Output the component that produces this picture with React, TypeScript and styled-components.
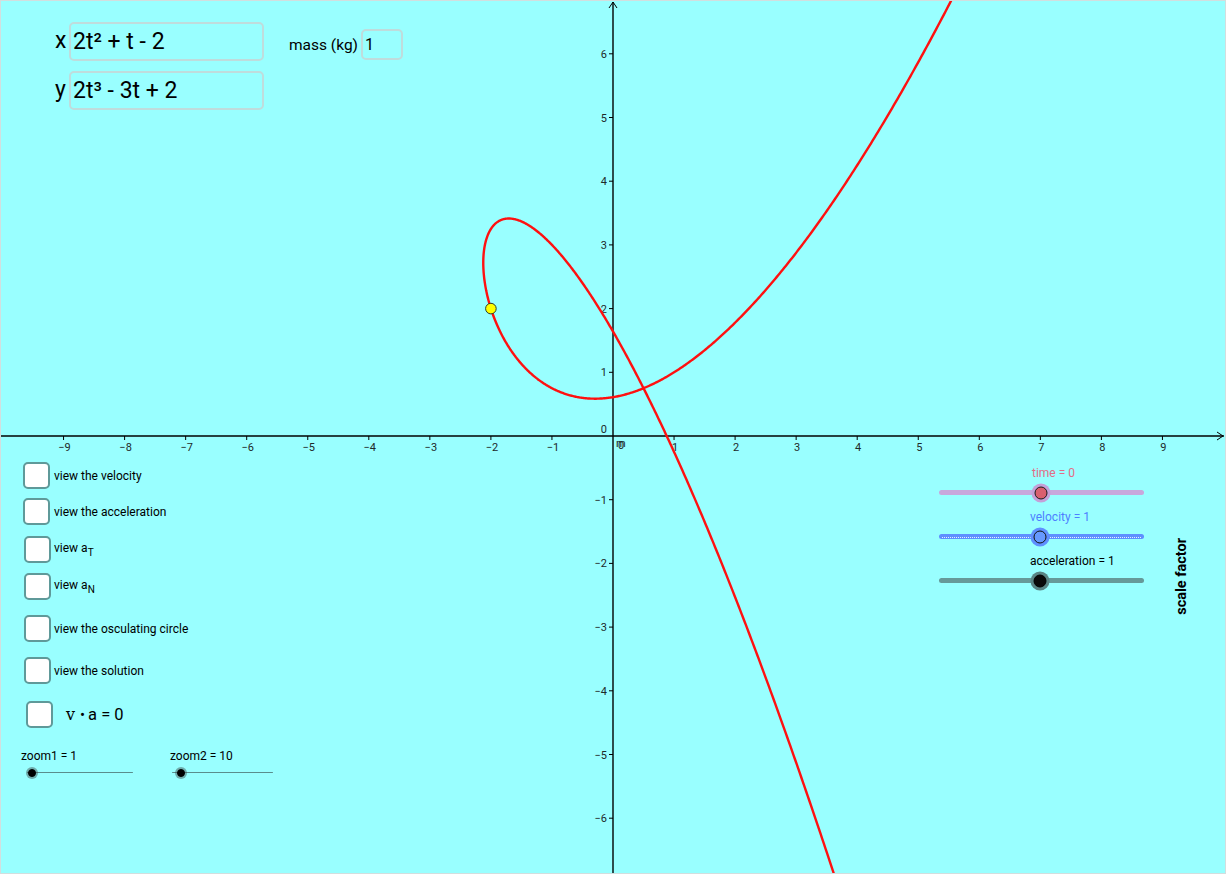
import React from "react";
import styled, { createGlobalStyle } from "styled-components";

const GlobalStyle = createGlobalStyle`
  html, body { margin: 0; padding: 0; background: #ffffff; }
  body { font-family: Roboto, "Noto Sans", sans-serif; }
`;

const OX = 612;
const OY = 435;
const SX = 61.05;
const SY = 63.7;
const W = 1224;
const H = 872;

const Stage = styled.div`
  position: relative;
  width: ${W}px;
  height: ${H}px;
  border: 1px solid #d2dede;
  background: #99ffff;
  overflow: hidden;
  font-family: Roboto, "Noto Sans", sans-serif;
  color: #000;
`;

const Graph = styled.svg`
  position: absolute;
  left: 0;
  top: 0;
  width: ${W}px;
  height: ${H}px;
`;

/* ---------- formula inputs ---------- */
const FormulaPanel = styled.div`
  position: absolute;
  left: 54px;
  top: 21px;
  display: flex;
  flex-direction: column;
  gap: 11px;
`;

const FormulaRow = styled.div`
  display: flex;
  align-items: center;
  height: 38px;
`;

const VarLabel = styled.span`
  width: 14px;
  font-size: 23px;
  line-height: 38px;
`;

const ExprBox = styled.div<{ $w: number; $h: number; $size: number }>`
  box-sizing: border-box;
  width: ${(p) => p.$w}px;
  height: ${(p) => p.$h}px;
  border: 2px solid #bfdcdc;
  border-radius: 5px;
  display: flex;
  align-items: center;
  padding-left: 2px;
  font-size: ${(p) => p.$size}px;
  white-space: nowrap;
`;

const MassGroup = styled.div`
  align-self: flex-end;
  display: flex;
  align-items: center;
  gap: 3px;
  margin-left: 25px;
`;

const MassLabel = styled.span`
  font-size: 15.5px;
`;

/* ---------- check boxes ---------- */
const CheckList = styled.div`
  position: absolute;
  left: 22px;
  top: 461px;
  display: flex;
  flex-direction: column;
`;

const CheckRow = styled.label<{ $mt: number; $indent: number; $gap: number }>`
  display: flex;
  align-items: center;
  gap: ${(p) => p.$gap}px;
  margin-top: ${(p) => p.$mt}px;
  margin-left: ${(p) => p.$indent}px;
  height: 27px;
`;

const Box = styled.span`
  box-sizing: border-box;
  width: 27px;
  height: 27px;
  border: 2px solid #5f9999;
  border-radius: 5px;
  background: #ffffff;
  flex: none;
`;

const CheckText = styled.span`
  font-size: 12px;
  white-space: nowrap;
`;

const Sub = styled.sub`
  font-size: 10px;
  vertical-align: -4px;
`;

const DotFormula = styled.span`
  font-size: 16.5px;
  white-space: nowrap;
`;

const Bullet = styled.span`
  font-size: 15px;
  margin: 0 3px 0 5px;
`;

const SerifV = styled.span`
  font-family: "DejaVu Serif", "Liberation Serif", serif;
  font-size: 16px;
`;

/* ---------- sliders ---------- */
const ZoomRow = styled.div`
  position: absolute;
  left: 20px;
  top: 748px;
  display: flex;
  gap: 0;
`;

const RightSliders = styled.div`
  position: absolute;
  left: 938px;
  top: 465px;
  display: flex;
  flex-direction: column;
  gap: 15px;
`;

const SliderBlock = styled.div<{ $w: number }>`
  width: ${(p) => p.$w}px;
  display: flex;
  flex-direction: column;
`;

const Caption = styled.span<{ $color: string; $indent: number }>`
  margin-left: ${(p) => p.$indent}px;
  color: ${(p) => p.$color};
  font-size: 12px;
  line-height: 14px;
  white-space: nowrap;
`;

const Track = styled.div<{
  $color: string;
  $thick: number;
  $w: number;
  $indent: number;
  $mt: number;
  $dotted?: boolean;
}>`
  position: relative;
  margin-left: ${(p) => p.$indent}px;
  margin-top: ${(p) => p.$mt}px;
  width: ${(p) => p.$w}px;
  height: ${(p) => p.$thick}px;
  background: ${(p) => p.$color};
  border-radius: ${(p) => p.$thick / 2}px;
  &::after {
    content: "";
    display: ${(p) => (p.$dotted ? "block" : "none")};
    position: absolute;
    left: 3px;
    right: 3px;
    top: 50%;
    border-top: 1px dotted rgba(255, 255, 255, 0.85);
  }
`;

const Knob = styled.span<{
  $fill: string;
  $halo: string;
  $r: number;
  $ring: string;
  $haloW: number;
}>`
  position: absolute;
  top: 50%;
  box-sizing: border-box;
  width: ${(p) => p.$r * 2}px;
  height: ${(p) => p.$r * 2}px;
  transform: translate(-50%, -50%);
  border-radius: 50%;
  background: ${(p) => p.$fill};
  border: 1px solid ${(p) => p.$ring};
  box-shadow: 0 0 0 ${(p) => p.$haloW}px ${(p) => p.$halo};
  z-index: 1;
`;

const ScaleFactor = styled.span`
  position: absolute;
  left: 1172px;
  top: 537px;
  writing-mode: vertical-rl;
  transform: rotate(180deg);
  font-size: 14.5px;
  font-weight: 700;
  white-space: nowrap;
`;

/* ---------- graph drawing ---------- */
const AxisText = styled.text`
  font-family: Roboto, "DejaVu Sans", sans-serif;
  font-size: 11px;
  fill: #1e2a2a;
`;

function buildCurve(): string {
  const pts: string[] = [];
  for (let t = -2.06; t <= 1.78; t += 0.004) {
    const x = 2 * t * t + t - 2;
    const y = 2 * t * t * t - 3 * t + 2;
    pts.push(`${(OX + x * SX).toFixed(2)},${(OY - y * SY).toFixed(2)}`);
  }
  return "M" + pts.join("L");
}

const minus = (k: number) => (k < 0 ? "\u2212" + Math.abs(k) : String(k));

function GraphView() {
  const xs: number[] = [];
  for (let k = -9; k <= 9; k++) if (k !== 0) xs.push(k);
  const ys: number[] = [];
  for (let k = -6; k <= 6; k++) if (k !== 0) ys.push(k);
  return (
    <Graph viewBox={`0 0 ${W} ${H}`}>
      <g stroke="#000" strokeWidth={1.4} fill="none">
        <line x1={0} y1={OY} x2={W - 1} y2={OY} />
        <line x1={OX} y1={H} x2={OX} y2={1} />
        <polyline points={`${W - 8},${OY - 4} ${W - 2},${OY} ${W - 8},${OY + 4}`} strokeWidth={1} />
        <polyline points={`${OX - 4},${7} ${OX},${1} ${OX + 4},${7}`} strokeWidth={1} />
        {xs.map((k) => (
          <line key={`xt${k}`} x1={OX + k * SX} y1={OY} x2={OX + k * SX} y2={OY + 4} strokeWidth={1} />
        ))}
        {ys.map((k) => (
          <line key={`yt${k}`} x1={OX - 4} y1={OY - k * SY} x2={OX} y2={OY - k * SY} strokeWidth={1} />
        ))}
      </g>
      {xs.map((k) => (
        <AxisText key={`xl${k}`} x={OX + k * SX + (k < 0 ? 1 : 1)} y={OY + 15} textAnchor="middle">
          {minus(k)}
        </AxisText>
      ))}
      {ys.map((k) => (
        <AxisText key={`yl${k}`} x={OX - 6} y={OY - k * SY + 4} textAnchor="end">
          {minus(k)}
        </AxisText>
      ))}
      <AxisText x={OX - 6} y={OY - 3} textAnchor="end">
        0
      </AxisText>
      <AxisText x={OX + 5} y={OY + 13} fill="#3c5a5a">
        0
      </AxisText>
      <AxisText x={OX + 3} y={OY + 11} fontSize={10}>
        m
      </AxisText>
      <path d={buildCurve()} stroke="#ff1010" strokeWidth={2.4} fill="none" strokeLinejoin="round" />
      <circle cx={OX - 2 * SX} cy={OY - 2 * SY} r={5.3} fill="#ffff00" stroke="#2a3a2a" strokeWidth={1} />
    </Graph>
  );
}

type SliderProps = {
  caption: string;
  captionColor: string;
  captionIndent: number;
  width: number;
  trackIndent: number;
  trackWidth: number;
  trackColor: string;
  thick: number;
  gap: number;
  knobAt: number;
  knobFill: string;
  knobRing: string;
  knobHalo: string;
  knobR: number;
  haloW: number;
  dotted?: boolean;
};

function Slider(p: SliderProps) {
  return (
    <SliderBlock $w={p.width}>
      <Caption $color={p.captionColor} $indent={p.captionIndent}>
        {p.caption}
      </Caption>
      <Track
        $color={p.trackColor}
        $thick={p.thick}
        $w={p.trackWidth}
        $indent={p.trackIndent}
        $mt={p.gap}
        $dotted={p.dotted}
      >
        <Knob
          style={{ left: p.knobAt }}
          $fill={p.knobFill}
          $ring={p.knobRing}
          $halo={p.knobHalo}
          $r={p.knobR}
          $haloW={p.haloW}
        />
      </Track>
    </SliderBlock>
  );
}

export default function App() {
  return (
    <>
      <GlobalStyle />
      <Stage>
        <GraphView />

        <FormulaPanel>
          <FormulaRow>
            <VarLabel>x</VarLabel>
            <ExprBox $w={195} $h={39} $size={23}>
              2t² + t - 2
            </ExprBox>
            <MassGroup>
              <MassLabel>mass (kg)</MassLabel>
              <ExprBox $w={42} $h={31} $size={16}>
                1
              </ExprBox>
            </MassGroup>
          </FormulaRow>
          <FormulaRow>
            <VarLabel>y</VarLabel>
            <ExprBox $w={195} $h={39} $size={23}>
              2t³ - 3t + 2
            </ExprBox>
          </FormulaRow>
        </FormulaPanel>

        <CheckList>
          <CheckRow $mt={0} $indent={0} $gap={4}>
            <Box />
            <CheckText>view the velocity</CheckText>
          </CheckRow>
          <CheckRow $mt={9} $indent={0} $gap={4}>
            <Box />
            <CheckText>view the acceleration</CheckText>
          </CheckRow>
          <CheckRow $mt={11} $indent={1} $gap={3}>
            <Box />
            <CheckText>
              view a<Sub>T</Sub>
            </CheckText>
          </CheckRow>
          <CheckRow $mt={10} $indent={1} $gap={3}>
            <Box />
            <CheckText>
              view a<Sub>N</Sub>
            </CheckText>
          </CheckRow>
          <CheckRow $mt={15} $indent={1} $gap={3}>
            <Box />
            <CheckText>view the osculating circle</CheckText>
          </CheckRow>
          <CheckRow $mt={15} $indent={1} $gap={3}>
            <Box />
            <CheckText>view the solution</CheckText>
          </CheckRow>
          <CheckRow $mt={17} $indent={3} $gap={13}>
            <Box />
            <DotFormula>
              <SerifV>v</SerifV>
              <Bullet>•</Bullet>a = 0
            </DotFormula>
          </CheckRow>
        </CheckList>

        <ZoomRow>
          <Slider
            caption="zoom1 = 1"
            captionColor="#000"
            captionIndent={0}
            width={149}
            trackIndent={6}
            trackWidth={106}
            trackColor="#5a8d8d"
            thick={1}
            gap={9}
            knobAt={5}
            knobFill="#000"
            knobRing="#000"
            knobHalo="rgba(60,70,70,0.45)"
            knobR={4}
            haloW={2}
          />
          <Slider
            caption="zoom2 = 10"
            captionColor="#000"
            captionIndent={0}
            width={110}
            trackIndent={2}
            trackWidth={101}
            trackColor="#5a8d8d"
            thick={1}
            gap={9}
            knobAt={9}
            knobFill="#000"
            knobRing="#000"
            knobHalo="rgba(60,70,70,0.45)"
            knobR={4}
            haloW={2}
          />
        </ZoomRow>

        <RightSliders>
          <Slider
            caption="time = 0"
            captionColor="#e36c86"
            captionIndent={93}
            width={210}
            trackIndent={0}
            trackWidth={205}
            trackColor="#c8a8dc"
            thick={5}
            gap={10}
            knobAt={102}
            knobFill="#d9606f"
            knobRing="#1a1a1a"
            knobHalo="#c4a0d8"
            knobR={6.5}
            haloW={3}
          />
          <Slider
            caption="velocity = 1"
            captionColor="#4d7fff"
            captionIndent={91}
            width={210}
            trackIndent={0}
            trackWidth={205}
            trackColor="#5f8fff"
            thick={5}
            gap={10}
            knobAt={101}
            knobFill="#6699ff"
            knobRing="#111"
            knobHalo="#5f8fff"
            knobR={6.5}
            haloW={3}
            dotted
          />
          <Slider
            caption="acceleration = 1"
            captionColor="#000"
            captionIndent={91}
            width={210}
            trackIndent={0}
            trackWidth={205}
            trackColor="#669999"
            thick={5}
            gap={10}
            knobAt={101}
            knobFill="#0a0a0a"
            knobRing="#000"
            knobHalo="#5a8585"
            knobR={6.5}
            haloW={3}
          />
        </RightSliders>

        <ScaleFactor>scale factor</ScaleFactor>
      </Stage>
    </>
  );
}
